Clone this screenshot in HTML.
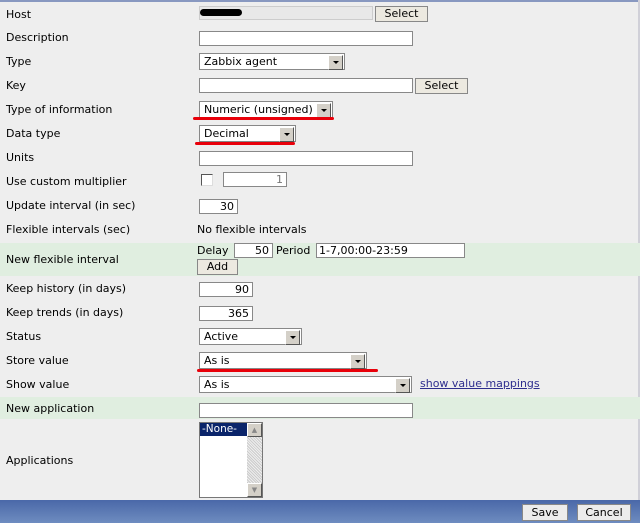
<!DOCTYPE html>
<html><head><meta charset="utf-8"><style>
*{margin:0;padding:0;box-sizing:border-box}
body{width:640px;height:523px;background:#eeeeee;font-family:"DejaVu Sans","Liberation Sans",sans-serif;font-size:11px;color:#000;position:relative;overflow:hidden}
.a{position:absolute;white-space:nowrap}
.lbl{left:6px}
.in{position:absolute;background:#fff;border:1px solid #888;height:15px;font-size:11px;line-height:13px;padding:0 3px;text-align:right}
.sel{position:absolute;background:#fff;border:1px solid #888;height:17px;font-size:11px;line-height:15px;padding-left:4px}
.sel:after{content:"";position:absolute;right:1px;top:1px;width:13px;height:13px;background:#d4d0c8;border:1px solid;border-color:#fff #555 #555 #fff}
.sel:before{content:"";position:absolute;right:5px;top:7px;border:3px solid transparent;border-top:3px solid #000;z-index:2}
.btn{position:absolute;background:#ece9e0;border:1px solid #888;height:16px;font-size:11px;line-height:14px;text-align:center}
.green{position:absolute;left:0;width:640px;background:#e0eee0}
.red{position:absolute;height:3px;background:#e8000a;border-radius:2px}
</style></head><body>
<div class="a" style="left:0;top:0;width:640px;height:2px;background:#8898c0"></div>
<div class="a" style="right:0;top:0;width:2px;height:500px;background:#d0d0d8"></div>
<div class="green" style="top:243px;height:33px"></div>
<div class="green" style="top:397px;height:22px"></div>

<div class="a lbl" style="top:8px">Host</div>
<div class="a" style="left:199px;top:6px;width:174px;height:14px;background:#e8e8e8;border:1px solid #ccc"></div>
<div class="a" style="left:200px;top:9px;width:42px;height:7px;background:#000;border-radius:4px"></div>
<div class="btn" style="left:375px;top:6px;width:53px">Select</div>

<div class="a lbl" style="top:31px">Description</div>
<div class="in" style="left:199px;top:31px;width:214px"></div>

<div class="a lbl" style="top:55px">Type</div>
<div class="sel" style="left:199px;top:53px;width:146px">Zabbix agent</div>

<div class="a lbl" style="top:79px">Key</div>
<div class="in" style="left:199px;top:78px;width:214px"></div>
<div class="btn" style="left:415px;top:78px;width:53px">Select</div>

<div class="a lbl" style="top:103px">Type of information</div>
<div class="sel" style="left:199px;top:101px;width:134px">Numeric (unsigned)</div>
<div class="red" style="left:193px;top:117px;width:141px"></div>

<div class="a lbl" style="top:127px">Data type</div>
<div class="sel" style="left:199px;top:125px;width:97px">Decimal</div>
<div class="red" style="left:195px;top:142px;width:100px"></div>

<div class="a lbl" style="top:151px">Units</div>
<div class="in" style="left:199px;top:151px;width:214px"></div>

<div class="a lbl" style="top:175px">Use custom multiplier</div>
<div class="a" style="left:201px;top:174px;width:12px;height:12px;background:#fff;border:1px solid;border-color:#555 #ddd #ddd #555"></div>
<div class="in" style="left:223px;top:172px;width:64px;color:#777">1</div>

<div class="a lbl" style="top:199px">Update interval (in sec)</div>
<div class="in" style="left:199px;top:199px;width:39px">30</div>

<div class="a lbl" style="top:223px">Flexible intervals (sec)</div>
<div class="a" style="left:197px;top:223px">No flexible intervals</div>

<div class="a lbl" style="top:253px">New flexible interval</div>
<div class="a" style="left:197px;top:244px">Delay</div>
<div class="in" style="left:234px;top:243px;width:39px">50</div>
<div class="a" style="left:276px;top:244px">Period</div>
<div class="in" style="left:316px;top:243px;width:149px;text-align:left;padding-left:2px">1-7,00:00-23:59</div>
<div class="btn" style="left:197px;top:259px;width:41px">Add</div>

<div class="a lbl" style="top:282px">Keep history (in days)</div>
<div class="in" style="left:199px;top:282px;width:54px">90</div>
<div class="a lbl" style="top:306px">Keep trends (in days)</div>
<div class="in" style="left:199px;top:306px;width:54px">365</div>

<div class="a lbl" style="top:330px">Status</div>
<div class="sel" style="left:199px;top:328px;width:103px">Active</div>

<div class="a lbl" style="top:354px">Store value</div>
<div class="sel" style="left:199px;top:352px;width:168px">As is</div>
<div class="red" style="left:197px;top:369px;width:181px"></div>

<div class="a lbl" style="top:378px">Show value</div>
<div class="sel" style="left:199px;top:376px;width:213px">As is</div>
<div class="a" style="left:420px;top:377px;color:#2e2e8e;text-decoration:underline">show value mappings</div>

<div class="a lbl" style="top:402px">New application</div>
<div class="in" style="left:199px;top:403px;width:214px"></div>

<div class="a lbl" style="top:454px">Applications</div>
<div class="a" style="left:199px;top:422px;width:64px;height:76px;background:#fff;border:1px solid #777"></div>
<div class="a" style="left:200px;top:423px;width:47px;height:13px;background:#0a246a;color:#fff;font-size:10.5px;line-height:13px;padding-left:2px">-None-</div>
<div class="a" style="left:247px;top:423px;width:15px;height:74px;background:#ddd repeating-linear-gradient(45deg,#ccc 0 1px,#eee 1px 2px)"></div>
<div class="a" style="left:247px;top:423px;width:15px;height:14px;background:#d4d0c8;border:1px solid;border-color:#fff #555 #555 #fff;font-size:7px;color:#888;text-align:center;line-height:12px">▲</div>
<div class="a" style="left:247px;top:483px;width:15px;height:14px;background:#d4d0c8;border:1px solid;border-color:#fff #555 #555 #fff;font-size:7px;color:#888;text-align:center;line-height:12px">▼</div>

<div class="a" style="left:0;top:500px;width:640px;height:23px;background:linear-gradient(#4a68a8,#6e8cc0)"></div>
<div class="btn" style="left:522px;top:504px;width:46px;height:17px;background:#ececec;line-height:15px">Save</div>
<div class="btn" style="left:577px;top:504px;width:54px;height:17px;background:#ececec;line-height:15px">Cancel</div>
</body></html>
